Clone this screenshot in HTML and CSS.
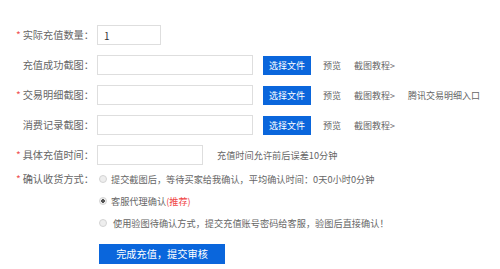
FILE: index.html
```html
<!DOCTYPE html>
<html lang="zh-CN">
<head>
    <meta charset="UTF-8">
    <title>完成充值</title>
    <link rel="stylesheet" href="styles.css">
</head>
<body>
    <form class="form">
        <div class="row">
            <label class="label"><span class="req">*</span>实际充值数量：</label>
            <input class="ipt ipt-num" type="text" value="1">
        </div>
        <div class="row">
            <label class="label">充值成功截图：</label>
            <input class="ipt ipt-file" type="text">
            <span class="btn-file">选择文件</span>
            <a class="link link-first">预览</a>
            <a class="link">截图教程&gt;</a>
        </div>
        <div class="row">
            <label class="label"><span class="req">*</span>交易明细截图：</label>
            <input class="ipt ipt-file" type="text">
            <span class="btn-file">选择文件</span>
            <a class="link link-first">预览</a>
            <a class="link">截图教程&gt;</a>
            <a class="link">腾讯交易明细入口</a>
        </div>
        <div class="row">
            <label class="label">消费记录截图：</label>
            <input class="ipt ipt-file" type="text">
            <span class="btn-file">选择文件</span>
            <a class="link link-first">预览</a>
            <a class="link">截图教程&gt;</a>
        </div>
        <div class="row row-time">
            <label class="label"><span class="req">*</span>具体充值时间：</label>
            <input class="ipt ipt-time" type="text">
            <span class="hint">充值时间允许前后误差10分钟</span>
        </div>
        <div class="row row-radio">
            <label class="label"><span class="req">*</span>确认收货方式：</label>
            <div class="radios">
                <label class="opt"><input class="radio" type="radio" name="confirm">提交截图后，等待买家给我确认，平均确认时间：0天0小时0分钟</label>
                <label class="opt"><input class="radio" type="radio" name="confirm" checked>客服代理确认<span class="red">(推荐)</span></label>
                <label class="opt opt-wide"><input class="radio" type="radio" name="confirm">使用验图待确认方式，提交充值账号密码给客服，验图后直接确认！</label>
            </div>
        </div>
        <div class="actions">
            <button class="btn-submit" type="button">完成充值，提交审核</button>
        </div>
    </form>
</body>
</html>
```

FILE: styles.css
```css
body {
    margin: 0;
    background: #fff;
    font-family: "Noto Sans CJK SC", "Liberation Sans", sans-serif;
    color: #666;
}

.form {
    padding-top: 25px;
}

.row {
    display: flex;
    align-items: center;
    height: 20px;
    margin-bottom: 10px;
}

.label {
    width: 94px;
    margin-right: 3px;
    flex-shrink: 0;
    text-align: right;
    font-size: 10.2px;
    line-height: 20px;
    white-space: nowrap;
}

.req {
    color: #f05050;
    margin-right: 2px;
}

.ipt {
    box-sizing: border-box;
    height: 20px;
    border: 1px solid #dedede;
    padding: 0 6px;
    font-family: inherit;
    font-size: 10px;
    color: #333;
    outline: none;
}

.ipt-num {
    width: 64px;
}

.ipt-file {
    width: 156px;
}

.ipt-time {
    width: 106px;
}

.btn-file {
    display: inline-block;
    width: 48px;
    height: 19px;
    margin-left: 10px;
    background: #0a66dc;
    color: #fff;
    font-size: 9px;
    line-height: 19px;
    text-align: center;
}

.link {
    margin-left: 13px;
    font-size: 9px;
    color: #666;
}

.link-first {
    margin-left: 12px;
}

.hint {
    margin-left: 14px;
    font-size: 9.2px;
}

.row-time {
    margin-bottom: 3px;
}

.row-radio {
    height: auto;
    align-items: flex-start;
    margin-bottom: 0;
}

.row-radio .label {
    line-height: 22px;
}

.radios {
    display: flex;
    flex-direction: column;
}

.opt {
    display: flex;
    align-items: center;
    height: 22px;
    font-size: 9.2px;
    white-space: nowrap;
}

.radio {
    appearance: none;
    -webkit-appearance: none;
    box-sizing: border-box;
    width: 8px;
    height: 8px;
    margin: 0 4px 0 2px;
    border: 1px solid #d4d4d4;
    border-radius: 50%;
    background: #eee;
}

.radio:checked {
    background: radial-gradient(circle, #555 0 1.6px, #eee 2px);
}

.opt-wide .radio {
    margin-right: 6px;
}

.red {
    color: #f04848;
}

.actions {
    padding-left: 99px;
    margin-top: 5px;
}

.btn-submit {
    width: 126px;
    height: 20px;
    border: 0;
    padding: 0;
    background: #0a66dc;
    color: #fff;
    font-family: inherit;
    font-size: 10.2px;
}
```
